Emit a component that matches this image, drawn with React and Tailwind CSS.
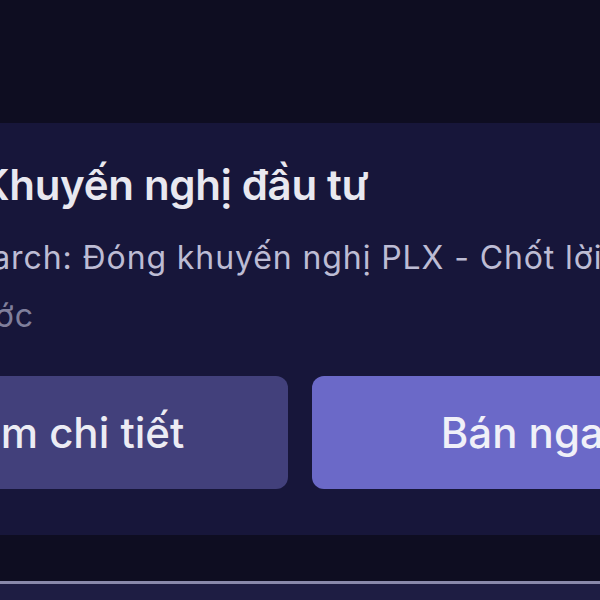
export default function App() {
  return (
    <div className="w-[600px] h-[600px] overflow-hidden bg-[#0e0d21] flex flex-col font-['Inter','Noto_Sans',sans-serif]">
      <div className="h-[123px] shrink-0" />
      <div className="ml-[-180px] w-[960px] h-[412px] shrink-0 bg-[#17163a] px-6 pt-[37px] pb-[46px] flex flex-col">
        <div className="text-[42px] leading-[50px] font-semibold tracking-[-0.3px] text-[#e8e8f0] whitespace-nowrap pl-[136px]">
          Khuyến nghị đầu tư
        </div>
        <div className="mt-[28px] text-[32px] leading-[40px] tracking-[0.9px] text-[#bdbcd4] whitespace-nowrap pl-[70px]">
          Research: Đóng khuyến nghị PLX - Chốt lời
        </div>
        <div className="mt-[18px] text-[32px] leading-[40px] tracking-[0.9px] text-[#807f9c] whitespace-nowrap pl-[24px]">
          1 giờ trước
        </div>
        <div className="mt-[40px] flex gap-6">
          <button className="w-[444px] h-[113px] rounded-[12px] bg-[#42407b] text-[42px] font-medium text-[#ececf4]">
            Xem chi tiết
          </button>
          <button className="w-[444px] h-[113px] rounded-[12px] bg-[#6b69c8] text-[42px] font-medium text-[#f0f0f8]">
            Bán ngay
          </button>
        </div>
      </div>
      <div className="h-[46px] shrink-0" />
      <div className="h-[3px] shrink-0 bg-[#8a89ab]" />
      <div className="flex-1 bg-[#1e1d43]" />
    </div>
  );
}
